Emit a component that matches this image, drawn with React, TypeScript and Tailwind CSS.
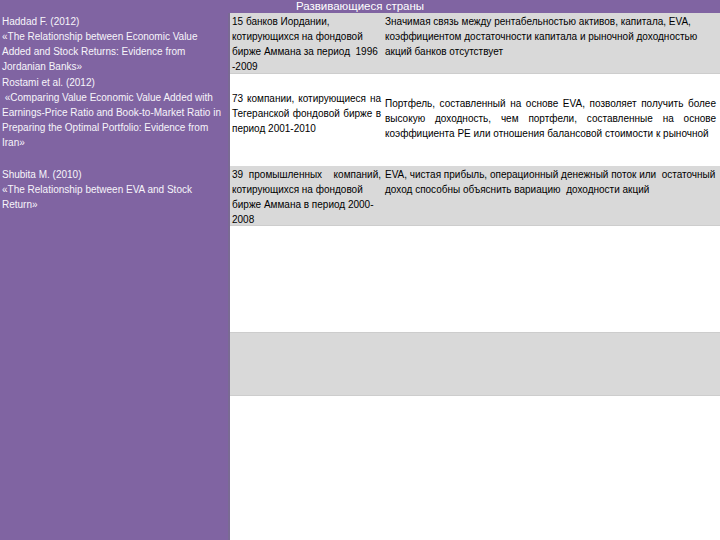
import type { ReactNode } from "react";

const PURPLE = "bg-[#8064a2]";

function Lines({ lines, justify = 0 }: { lines: string[]; justify?: number }) {
  // justify = number of leading lines stretched to the cell width
  return (
    <>
      {lines.map((l, i) => (
        <div
          key={i}
          className={
            i < justify
              ? "whitespace-pre text-justify [text-align-last:justify]"
              : "whitespace-pre"
          }
        >
          {l}
        </div>
      ))}
    </>
  );
}

function LeftCell({ children }: { children?: ReactNode }) {
  return (
    <div className={`${PURPLE} border-r-2 border-[#7a6a94] pl-[2px] pt-[1px] text-[#f7f5fa] overflow-hidden`}>
      {children}
    </div>
  );
}

function Cell({
  children,
  gray,
  className = "",
}: {
  children?: ReactNode;
  gray?: boolean;
  className?: string;
}) {
  return (
    <div
      className={`${gray ? "bg-[#d9d9d9] border-b border-[#cdcdcd]" : "bg-white"} px-[2px] text-black overflow-hidden ${className}`}
    >
      {children}
    </div>
  );
}

export default function App() {
  return (
    <main
      className={`${PURPLE} h-[540px] w-[720px] overflow-hidden grid grid-cols-[230px_153px_1fr] grid-rows-[13px_61px_92px_60px_106px_64px_1fr] text-[10px] leading-[15px]`}
      style={{ fontFamily: '"Liberation Sans", Arial, sans-serif' }}
    >
      <div className="col-span-3 text-center text-white text-[11.5px] leading-[13px]">
        Развивающиеся страны
      </div>

      {/* Haddad */}
      <LeftCell>
        <Lines
          lines={[
            "Haddad F. (2012)",
            "«The Relationship between Economic Value",
            "Added and Stock Returns: Evidence from",
            "Jordanian Banks»",
          ]}
        />
      </LeftCell>
      <Cell gray className="pt-[1px]">
        <Lines
          lines={[
            "15 банков Иордании,",
            "котирующихся на фондовой",
            "бирже Аммана за период  1996",
            "-2009",
          ]}
        />
      </Cell>
      <Cell gray className="pt-[1px]">
        <Lines
          lines={[
            "Значимая связь между рентабельностью активов, капитала, EVA,",
            "коэффициентом достаточности капитала и рыночной доходностью",
            "акций банков отсутствует",
          ]}
        />
      </Cell>

      {/* Rostami */}
      <LeftCell>
        <Lines
          lines={[
            "Rostami et al. (2012)",
            " «Comparing Value Economic Value Added with",
            "Earnings-Price Ratio and Book-to-Market Ratio in",
            "Preparing the Optimal Portfolio: Evidence from",
            "Iran»",
          ]}
        />
      </LeftCell>
      <Cell className="pt-[17px]">
        <Lines
          justify={2}
          lines={[
            "73 компании, котирующиеся на",
            "Тегеранской фондовой бирже в",
            "период 2001-2010",
          ]}
        />
      </Cell>
      <Cell className="pt-[22px] pr-[4px]">
        <Lines
          justify={2}
          lines={[
            "Портфель, составленный на основе EVA, позволяет получить более",
            "высокую доходность, чем портфели, составленные на основе",
            "коэффициента PE или отношения балансовой стоимости к рыночной",
          ]}
        />
      </Cell>

      {/* Shubita */}
      <LeftCell>
        <Lines
          lines={[
            "Shubita M. (2010)",
            "«The Relationship between EVA and Stock",
            "Return»",
          ]}
        />
      </LeftCell>
      <Cell gray className="pt-[1px]">
        <Lines
          justify={1}
          lines={[
            "39 промышленных  компаний,",
            "котирующихся на фондовой",
            "бирже Аммана в период 2000-",
            "2008",
          ]}
        />
      </Cell>
      <Cell gray className="pt-[1px]">
        <Lines
          lines={[
            "EVA, чистая прибыль, операционный денежный поток или  остаточный",
            "доход способны объяснить вариацию  доходности акций",
          ]}
        />
      </Cell>

      {/* empty rows */}
      <LeftCell />
      <Cell />
      <Cell />

      <LeftCell />
      <Cell gray className="border-t" />
      <Cell gray className="border-t" />

      <LeftCell />
      <Cell />
      <Cell />
    </main>
  );
}
